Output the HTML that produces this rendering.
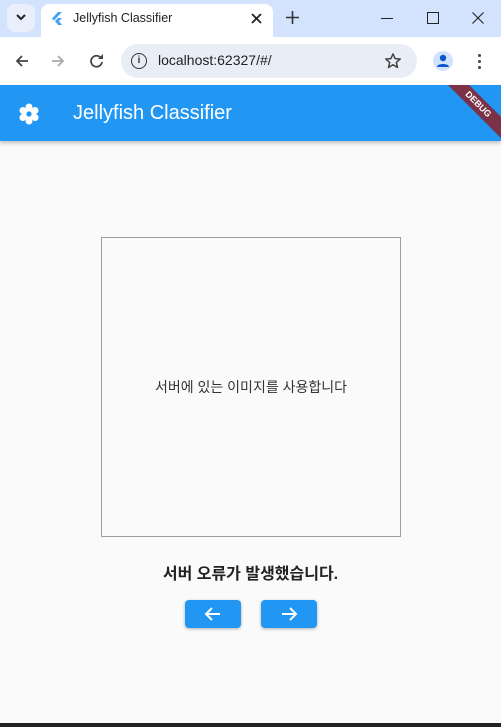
<!DOCTYPE html><html><head><meta charset="utf-8"><style>
body{margin:0;width:501px;height:727px;overflow:hidden;background:#fafafa;font-family:"Liberation Sans","Noto Sans CJK KR",sans-serif;position:relative}
.a{position:absolute}
</style></head><body>
<div class="a" style="left:0;top:0;width:501px;height:37px;background:#d3e3fd"></div>
<div class="a" style="left:7px;top:4px;width:28px;height:28px;border-radius:8px;background:#e8effb"></div>
<svg class="a" style="left:14px;top:12px" width="14" height="10"><path d="M3 3l4 4 4-4" stroke="#222" stroke-width="2" fill="none"/></svg>
<div class="a" style="left:41px;top:4px;width:232px;height:33px;background:#fff;border-radius:8px 8px 0 0"></div>
<svg class="a" style="left:52px;top:12px" width="10" height="13"><path d="M6 0L0 6.5 2 8.5 10 0z M6 6L3 9l3 4h4L7 9l3-3z" fill="#42a5f5"/></svg>
<div class="a" style="left:73px;top:11px;font-size:12.5px;color:#222">Jellyfish Classifier</div>
<svg class="a" style="left:251px;top:13px" width="11" height="11"><path d="M1 1l9 9M10 1l-9 9" stroke="#222" stroke-width="1.8"/></svg>
<svg class="a" style="left:286px;top:11px" width="13" height="13"><path d="M6.5 0v13M0 6.5h13" stroke="#333" stroke-width="1.6"/></svg>
<div class="a" style="left:381px;top:18px;width:12px;height:1px;background:#222"></div>
<div class="a" style="left:427px;top:12px;width:10px;height:10px;border:1px solid #222"></div>
<svg class="a" style="left:472px;top:12px" width="12" height="12"><path d="M0.5 0.5l11 11M11.5 0.5l-11 11" stroke="#222" stroke-width="1.1"/></svg>
<div class="a" style="left:0;top:37px;width:501px;height:48px;background:#fff"></div>
<svg class="a" style="left:14px;top:52px" width="100" height="18"><path d="M14 9H3M8 4L3 9l5 5" stroke="#444" stroke-width="1.8" fill="none"/><path d="M38 9h11M44 4l5 5-5 5" stroke="#aaa" stroke-width="1.8" fill="none"/><path d="M87 6a5.5 5.5 0 1 0 1 4" stroke="#444" stroke-width="1.8" fill="none"/><path d="M89 2v5h-5z" fill="#444"/></svg>
<div class="a" style="left:121px;top:44px;width:296px;height:34px;border-radius:17px;background:#e9eef6"></div>
<div class="a" style="left:131px;top:53px;width:14px;height:14px;border:1.5px solid #333;border-radius:50%;font-size:10px;text-align:center;line-height:14px;font-weight:bold;color:#333">i</div>
<div class="a" style="left:158px;top:52px;font-size:14px;color:#222">localhost:62327/#/</div>
<svg class="a" style="left:384px;top:52px" width="18" height="18" viewBox="0 0 24 24"><path d="M12 2.5l2.8 6.3 6.8.6-5.2 4.5 1.6 6.7L12 17l-6 3.6 1.6-6.7-5.2-4.5 6.8-.6z" fill="none" stroke="#444" stroke-width="2" stroke-linejoin="round"/></svg>
<div class="a" style="left:433px;top:51px;width:20px;height:20px;border-radius:50%;background:#d3e3fd"></div>
<svg class="a" style="left:436px;top:53px" width="14" height="16"><circle cx="7" cy="5" r="3.2" fill="#0b57d0"/><path d="M1 14c0-4 12-4 12 0z" fill="#0b57d0"/></svg>
<div class="a" style="left:478px;top:54px;width:3px;height:3px;border-radius:50%;background:#444;box-shadow:0 6px #444,0 12px #444"></div>
<div class="a" style="left:0;top:85px;width:501px;height:56px;background:#2196f3;box-shadow:0 2px 4px rgba(0,0,0,.25);overflow:hidden">
<div class="a" style="left:428px;top:12px;width:100px;height:15px;background:#7b3146;transform:rotate(45deg);color:#fff;font-size:9px;font-weight:bold;text-align:center;line-height:15px">DEBUG</div>
</div>
<svg class="a" style="left:18px;top:103px" width="22" height="22" viewBox="0 0 22 22"><g fill="#fff"><circle cx="11" cy="11" r="6"/><g id="p"><ellipse cx="11" cy="4" rx="3.5" ry="3.5"/></g><use href="#p" transform="rotate(60 11 11)"/><use href="#p" transform="rotate(120 11 11)"/><use href="#p" transform="rotate(180 11 11)"/><use href="#p" transform="rotate(240 11 11)"/><use href="#p" transform="rotate(300 11 11)"/></g><circle cx="11" cy="11" r="2.6" fill="#2196f3"/></svg>
<div class="a" style="left:73px;top:102px;font-size:20px;color:#fff">Jellyfish Classifier</div>
<div class="a" style="left:101px;top:237px;width:298px;height:298px;border:1px solid #9e9e9e"></div>
<div class="a" style="left:101px;top:377px;width:300px;text-align:center;font-size:14px;color:#333">서버에 있는 이미지를 사용합니다</div>
<div class="a" style="left:0;top:560px;width:501px;text-align:center;font-size:16px;font-weight:bold;color:#222">서버 오류가 발생했습니다.</div>
<div class="a" style="left:185px;top:600px;width:56px;height:28px;background:#2196f3;border-radius:4px;box-shadow:0 1px 3px rgba(0,0,0,.3)"></div>
<div class="a" style="left:261px;top:600px;width:56px;height:28px;background:#2196f3;border-radius:4px;box-shadow:0 1px 3px rgba(0,0,0,.3)"></div>
<svg class="a" style="left:203px;top:605px" width="20" height="18"><path d="M17 9H3M9 3L3 9l6 6" stroke="#fff" stroke-width="2" fill="none"/></svg>
<svg class="a" style="left:279px;top:605px" width="20" height="18"><path d="M3 9h14M11 3l6 6-6 6" stroke="#fff" stroke-width="2" fill="none"/></svg>
<div class="a" style="left:0;top:723px;width:501px;height:4px;background:#222"></div>
</body></html>
